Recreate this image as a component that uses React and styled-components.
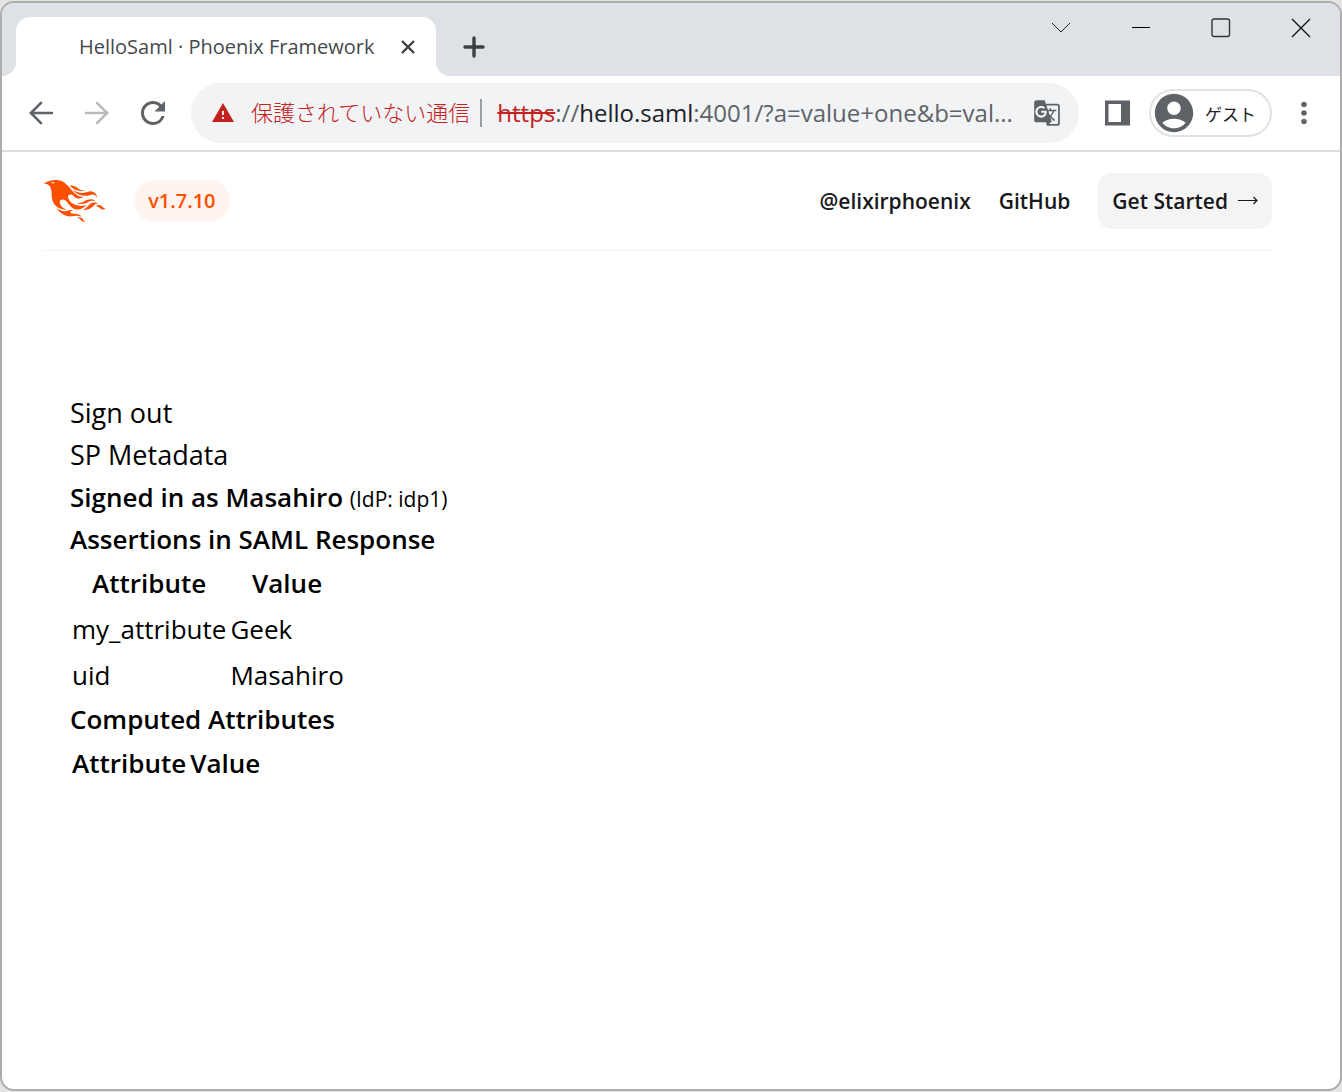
import React from "react";

import styled, { createGlobalStyle } from "styled-components";
import {
  MdAccountCircle,
  MdGTranslate,
  MdMoreVert,
  MdRefresh,
  MdWarning,
} from "react-icons/md";

const assertions = [
  { name: "my_attribute", value: "Geek" },
  { name: "uid", value: "Masahiro" },
];

const PhoenixLogo = () => (
  <svg viewBox="0 0 71 48" height="42" aria-hidden="true">
    <path
      fill="#FD4F00"
      d="m26.371 33.477-.552-.1c-3.92-.729-6.397-3.1-7.57-6.829-.733-2.324.597-4.035 3.035-4.148 1.995-.092 3.362 1.055 4.57 2.39 1.557 1.72 2.984 3.558 4.514 5.305 2.202 2.515 4.797 4.134 8.347 3.634 3.183-.448 5.958-1.725 8.371-3.828.363-.316.761-.592 1.144-.886l-.241-.284c-2.027.63-4.093.841-6.205.735-3.195-.16-6.24-.828-8.964-2.582-2.486-1.601-4.319-3.746-5.19-6.611-.704-2.315.736-3.934 3.135-3.6.948.133 1.746.56 2.463 1.165.583.493 1.143 1.015 1.738 1.493 2.8 2.25 6.712 2.375 10.265-.068-5.842-.026-9.817-3.24-13.308-7.313-1.366-1.594-2.7-3.216-4.095-4.785-2.698-3.036-5.692-5.71-9.79-6.623C12.8-.623 7.745.14 2.893 2.361 1.926 2.804.997 3.319 0 4.149c.494 0 .763.006 1.032 0 2.446-.064 4.28 1.023 5.602 3.024.962 1.457 1.415 3.104 1.761 4.798.513 2.515.247 5.078.544 7.605.761 6.494 4.08 11.026 10.26 13.346 2.267.852 4.591 1.135 7.172.555ZM10.751 3.852c-.976.246-1.756-.148-2.56-.962 1.377-.343 2.592-.476 3.897-.528-.107.848-.607 1.306-1.336 1.49Zm32.002 37.924c-.085-.626-.62-.901-1.04-1.228-1.857-1.446-4.03-1.958-6.333-2-1.375-.026-2.735-.128-4.031-.61-.595-.22-1.26-.505-1.244-1.272.015-.78.693-1 1.31-1.184.505-.15 1.026-.247 1.6-.382-1.46-.936-2.886-1.065-4.787-.3-2.993 1.202-5.943 1.06-8.926-.017-1.684-.608-3.179-1.563-4.735-2.408l-.077.057c1.29 2.115 3.034 3.817 5.004 5.271 3.793 2.8 7.936 4.471 12.784 3.73A66.714 66.714 0 0 1 37 40.877c1.98-.16 3.866.398 5.753.899Zm-9.14-30.345c-.105-.076-.206-.266-.42-.069 1.745 2.36 3.985 4.098 6.683 5.193 4.354 1.767 8.773 2.07 13.293.51 3.51-1.21 6.033-.028 7.343 3.38.19-3.955-2.137-6.837-5.843-7.401-2.084-.318-4.01.373-5.962.94-5.434 1.575-10.485.798-15.094-2.553Zm27.085 15.425c.708.059 1.416.123 2.124.185-1.6-1.405-3.55-1.517-5.523-1.404-3.003.17-5.167 1.903-7.14 3.972-1.739 1.824-3.31 3.87-5.903 4.604.043.078.054.117.066.117.35.005.699.021 1.047.005 3.768-.17 7.317-.965 10.14-3.7.89-.86 1.685-1.817 2.544-2.71.716-.746 1.584-1.159 2.645-1.07Zm-8.753-4.67c-2.812.246-5.254 1.409-7.548 2.943-1.766 1.18-3.654 1.738-5.776 1.37-.374-.066-.75-.114-1.124-.17l-.013.156c.135.07.265.151.405.207.354.14.702.308 1.07.395 4.083.971 7.992.474 11.516-1.803 2.221-1.435 4.521-1.707 7.013-1.336.252.038.503.083.756.107.234.022.479.255.795.003-2.179-1.574-4.526-2.096-7.094-1.872Zm-10.049-9.544c1.475.051 2.943-.142 4.486-1.059-.452.04-.643.04-.827.076-2.126.424-4.033-.04-5.733-1.383-.623-.493-1.257-.974-1.889-1.457-2.503-1.914-5.374-2.555-8.514-2.5.05.154.054.26.108.315 3.417 3.455 7.371 5.836 12.369 6.008Zm24.727 17.731c-2.114-2.097-4.952-2.367-7.578-.537 1.738.078 3.043.632 4.101 1.728.374.388.763.768 1.182 1.106 1.6 1.29 4.311 1.352 5.896.155-1.861-.726-1.861-.726-3.601-2.452Zm-21.058 16.06c-1.858-3.46-4.981-4.24-8.59-4.008a9.667 9.667 0 0 1 2.977 1.39c.84.586 1.547 1.311 2.243 2.055 1.38 1.473 3.534 2.376 4.962 2.07-.656-.412-1.238-.848-1.592-1.507Z"
    />
  </svg>
);

const App = () => {
  return (
    <React.Fragment>
      <GlobalStyle />
      <Window>
        <TabStrip>
          <Tab>
            <TabTitle>HelloSaml · Phoenix Framework</TabTitle>
            <IconButton aria-label="タブを閉じる" $width={20}>
              <svg width="14" height="14" viewBox="0 0 14 14">
                <path d="M1 1l12 12M13 1L1 13" stroke="#3c4043" strokeWidth="2.4" />
              </svg>
            </IconButton>
          </Tab>
          <NewTab aria-label="新しいタブ" $width={28}>
            <svg width="22" height="22" viewBox="0 0 22 22">
              <path
                d="M11 2v18M2 11h18"
                stroke="#3c4043"
                strokeWidth="3.4"
                strokeLinecap="round"
              />
            </svg>
          </NewTab>
          <WindowButtons>
            <IconButton aria-label="タブを検索" $width={78}>
              <svg width="20" height="12" viewBox="0 0 20 12">
                <path d="M1 1l9 9 9-9" fill="none" stroke="#222" />
              </svg>
            </IconButton>
            <IconButton aria-label="最小化" $width={78}>
              <svg width="18" height="2" viewBox="0 0 18 2">
                <path d="M0 .5h18" stroke="#000" />
              </svg>
            </IconButton>
            <IconButton aria-label="最大化" $width={78}>
              <svg width="20" height="20" viewBox="0 0 20 20">
                <rect
                  x="1"
                  y="1"
                  width="17.5"
                  height="17.5"
                  rx="2"
                  fill="none"
                  stroke="#33353a"
                  strokeWidth="1.4"
                />
              </svg>
            </IconButton>
            <IconButton aria-label="閉じる" $width={78}>
              <svg width="20" height="20" viewBox="0 0 20 20">
                <path d="M1 1l18 18M19 1L1 19" stroke="#111" strokeWidth="1.3" />
              </svg>
            </IconButton>
          </WindowButtons>
        </TabStrip>

        <Toolbar>
          <IconButton aria-label="戻る" $width={56}>
            <svg width="24" height="24" viewBox="0 0 24 24" fill="none">
              <path
                d="M23 12H2M12 1.8L1.8 12 12 22.2"
                stroke="#5f6368"
                strokeWidth="2.6"
                strokeLinecap="round"
              />
            </svg>
          </IconButton>
          <IconButton aria-label="進む" $width={56} disabled>
            <svg width="24" height="24" viewBox="0 0 24 24" fill="none">
              <path
                d="M1 12h21M12 1.8L22.2 12 12 22.2"
                stroke="#bababc"
                strokeWidth="2.6"
                strokeLinecap="round"
              />
            </svg>
          </IconButton>
          <IconButton aria-label="再読み込み" $width={56}>
            <MdRefresh size={36} color="#5f6368" />
          </IconButton>
          <AddressBar>
            <MdWarning size={24} color="#c5221f" />
            <Insecure>保護されていない通信</Insecure>
            <Url
              role="textbox"
              aria-label="アドレス"
              contentEditable
              suppressContentEditableWarning
              spellCheck={false}
            >
              <Scheme>https</Scheme>://<Host>hello.saml</Host>
              :4001/?a=value+one&amp;b=val...
            </Url>
            <IconButton aria-label="このページを翻訳" $width={28}>
              <MdGTranslate size={28} color="#5f6368" />
            </IconButton>
          </AddressBar>
          <IconButton aria-label="サイドパネル" $width={26}>
            <svg width="26" height="26" viewBox="0 0 26 26">
              <path
                fill="#5f6368"
                fillRule="evenodd"
                d="M0 .5h25v25H0zM3.5 4v18H16V4z"
              />
            </svg>
          </IconButton>
          <Profile>
            <MdAccountCircle size={46} color="#5f6368" />
            ゲスト
          </Profile>
          <IconButton aria-label="メニュー" $width={36}>
            <MdMoreVert size={34} color="#5f6368" />
          </IconButton>
        </Toolbar>

        <Page>
          <Header>
            <Brand>
              <a href="/" aria-label="Phoenix">
                <PhoenixLogo />
              </a>
              <Version>v1.7.10</Version>
            </Brand>
            <Nav>
              <a href="https://twitter.com/elixirphoenix">@elixirphoenix</a>
              <a href="https://github.com/phoenixframework/phoenix">GitHub</a>
              <GetStarted href="https://hexdocs.pm/phoenix/overview.html">
                Get Started
                <svg width="20" height="10" viewBox="0 0 20 10" aria-hidden="true">
                  <path
                    d="M0 4.5h19M15.5 1l3.5 3.5L15.5 8"
                    fill="none"
                    stroke="#18181b"
                    strokeWidth="1.2"
                  />
                </svg>
              </GetStarted>
            </Nav>
          </Header>
          <Main>
            <div>
              <a href="/sso/auth/signout/idp1">Sign out</a>
            </div>
            <div>
              <a href="/sso/sp/metadata/idp1">SP Metadata</a>
            </div>
            <Heading>
              Signed in as Masahiro <Idp>(IdP: idp1)</Idp>
            </Heading>
            <Heading>Assertions in SAML Response</Heading>
            <Table>
              <thead>
                <tr>
                  <th>Attribute</th>
                  <th>Value</th>
                </tr>
              </thead>
              <tbody>
                {assertions.map((item) => (
                  <tr key={item.name}>
                    <td>{item.name}</td>
                    <td>{item.value}</td>
                  </tr>
                ))}
              </tbody>
            </Table>
            <Heading>Computed Attributes</Heading>
            <Table>
              <thead>
                <tr>
                  <th>Attribute</th>
                  <th>Value</th>
                </tr>
              </thead>
            </Table>
          </Main>
        </Page>
      </Window>
    </React.Fragment>
  );
};

export default App;

const GlobalStyle = createGlobalStyle`
  * {
    box-sizing: border-box;
  }
  body {
    margin: 0;
    background-color: #e4e4e4;
    font-family: "Open Sans", "Noto Sans CJK JP", sans-serif;
  }
  #root {
    display: flex;
    min-height: 100vh;
    padding: 1px 0;
  }
  a {
    color: inherit;
    text-decoration: none;
  }
  svg {
    display: block;
    flex-shrink: 0;
  }
`;

const Window = styled.div`
  display: flex;
  flex-direction: column;
  flex: 1;
  min-width: 0;
  border: 2px solid #adadad;
  border-radius: 14px;
  background-color: #fff;
  overflow: hidden;
`;

const TabStrip = styled.div`
  display: flex;
  height: 73px;
  padding: 14px 0 0 14px;
  background-color: #dee1e6;
`;
const Tab = styled.div`
  position: relative;
  display: flex;
  align-items: center;
  justify-content: space-between;
  width: 420px;
  padding: 0 18px 0 63px;
  border-radius: 14px 14px 0 0;
  background-color: #fff;

  &::before,
  &::after {
    content: "";
    position: absolute;
    bottom: 0;
    width: 14px;
    height: 14px;
  }
  &::before {
    right: 100%;
    background: radial-gradient(circle at 0 0, #dee1e6 14px, #fff 14px);
  }
  &::after {
    left: 100%;
    background: radial-gradient(circle at 100% 0, #dee1e6 14px, #fff 14px);
  }
`;
const TabTitle = styled.div`
  color: #45494d;
  font-size: 20px;
  white-space: nowrap;
`;

const IconButton = styled.button`
  display: flex;
  align-items: center;
  justify-content: center;
  flex-shrink: 0;
  width: ${(props) => props.$width}px;
  padding: 0;
  border: none;
  background: none;
`;
const NewTab = styled(IconButton)`
  margin-left: 24px;
`;
const WindowButtons = styled.div`
  display: flex;
  gap: 2px;
  height: 22px;
  margin-left: auto;
`;

const Toolbar = styled.div`
  display: flex;
  align-items: center;
  height: 76px;
  padding: 0 18px 0 11px;
  border-bottom: 2px solid #dcdcdc;
`;
const AddressBar = styled.div`
  display: flex;
  align-items: center;
  flex: 1;
  min-width: 0;
  height: 60px;
  margin: 0 26px 0 10px;
  padding: 0 18px 0 20px;
  border-radius: 30px;
  background-color: #f1f3f4;
`;
const Insecure = styled.div`
  margin-left: 16px;
  padding: 0 10px 4px 0;
  border-right: 2px solid #9a9da1;
  color: #c5221f;
  font-family: "Noto Sans CJK JP", sans-serif;
  font-size: 22px;
  font-weight: 300;
  line-height: 24px;
  white-space: nowrap;
`;
const Url = styled.div`
  flex: 1;
  min-width: 0;
  margin-left: 15px;
  padding-bottom: 2px;
  overflow: hidden;
  color: #5f6368;
  font-size: 24px;
  white-space: nowrap;
`;
const Scheme = styled.span`
  color: #c5221f;
  text-decoration: line-through;
`;
const Host = styled.span`
  color: #202124;
`;
const Profile = styled.button`
  display: flex;
  align-items: center;
  gap: 8px;
  height: 48px;
  margin: 0 14px 0 18px;
  padding: 0 14px 0 0;
  border: 2px solid #e1e2e4;
  border-radius: 24px;
  background-color: #fff;
  color: #202124;
  font-family: "Noto Sans CJK JP", sans-serif;
  font-size: 17px;
`;

const Page = styled.div`
  flex: 1;
  padding: 0 68px 0 42px;
`;
const Header = styled.header`
  display: flex;
  align-items: center;
  justify-content: space-between;
  padding: 21px 0;
  border-bottom: 1px solid #f4f4f5;
`;
const Brand = styled.div`
  display: flex;
  align-items: center;
  gap: 28px;
`;
const Version = styled.p`
  margin: 0;
  padding: 0 14px;
  border-radius: 21px;
  background-color: #fff4ef;
  color: #fd4f00;
  font-size: 20px;
  font-weight: 600;
  line-height: 42px;
`;
const Nav = styled.nav`
  display: flex;
  align-items: center;
  gap: 28px;
  color: #18181b;
  font-size: 21px;
  font-weight: 600;
  line-height: 42px;
`;
const GetStarted = styled.a`
  display: flex;
  align-items: center;
  gap: 10px;
  padding: 7px 14px;
  border-radius: 14px;
  background-color: #f4f4f5;
`;

const Main = styled.main`
  padding: 141px 26px 42px;
  color: #000;
  font-size: 27px;
  line-height: 42px;
`;
const Heading = styled.h2`
  margin: 0;
  font-size: 26px;
  font-weight: 600;
`;
const Idp = styled.small`
  font-size: 21px;
  font-weight: 400;
  line-height: 1;
`;
const Table = styled.table`
  border-collapse: collapse;
  font-size: 26px;

  th,
  td {
    padding: 2px;
  }
  th {
    font-weight: 600;
  }
`;
